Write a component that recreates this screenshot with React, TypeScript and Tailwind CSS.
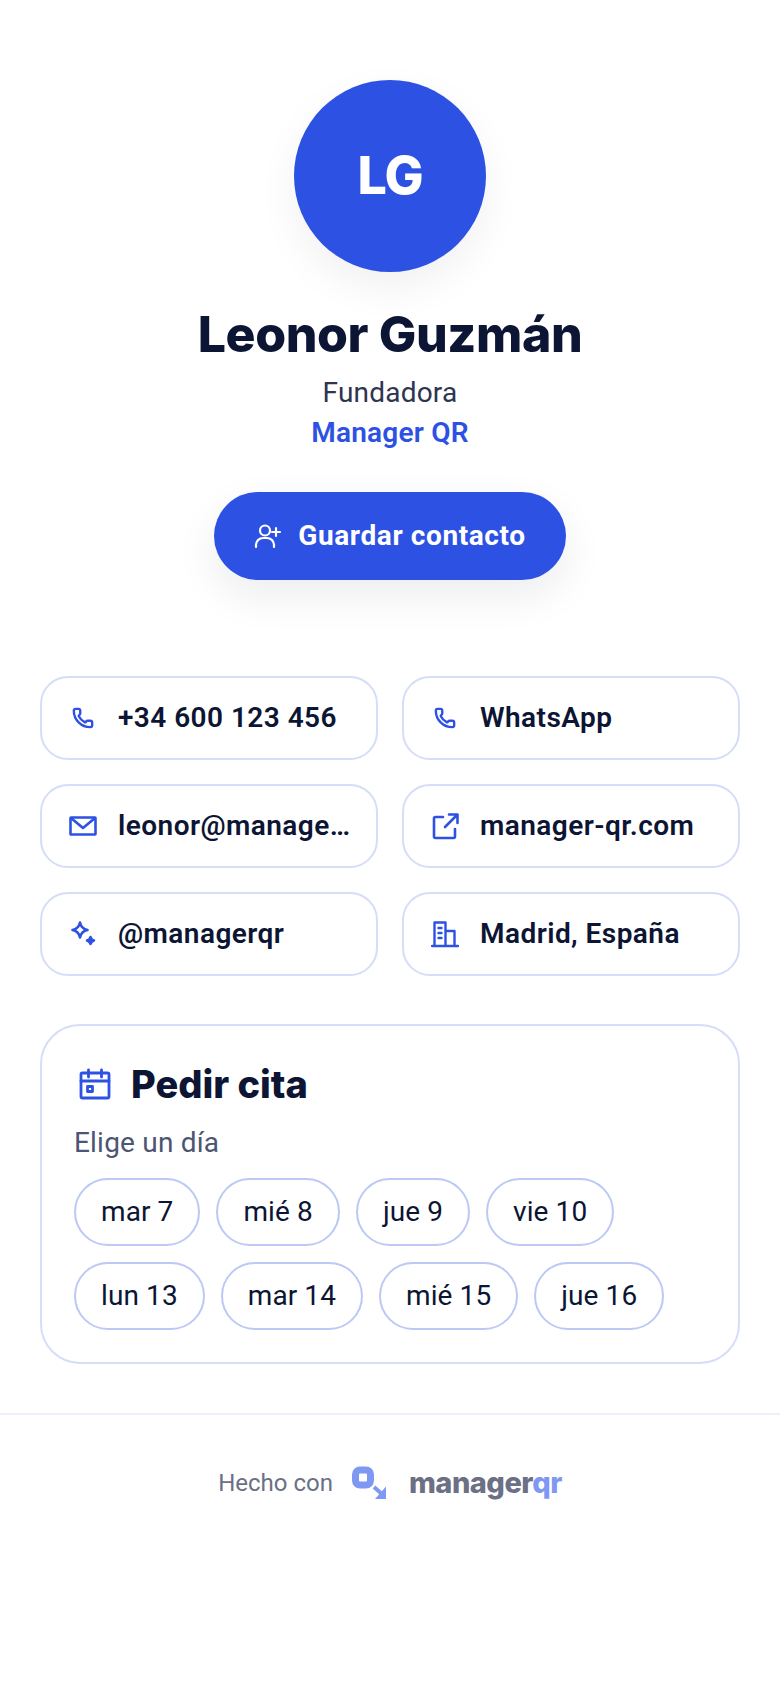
import { Phone } from 'lucide-react';
import type { ReactNode } from 'react';

const body = "font-['Roboto',sans-serif]";
const display = "font-['Inter',sans-serif]";

function UserPlusIcon() {
  return (
    <svg width="28" height="28" viewBox="0 0 28 28" fill="none" stroke="currentColor" strokeWidth="2.200" strokeLinecap="round" className="shrink-0">
      <circle cx="11" cy="8.500" r="5" />
      <path d="M2 25v-2.500a7 7 0 0 1 7-6.500h4a7 7 0 0 1 7 6.500V25" />
      <path d="M22 6v8M18 10h8" />
    </svg>
  );
}

function MailIcon() {
  return (
    <svg width="28" height="28" viewBox="0 0 28 28" fill="none" stroke="currentColor" strokeWidth="2.600" strokeLinejoin="round">
      <rect x="1.500" y="5.500" width="25" height="17" rx="0.500" />
      <path d="M2 6l12 10L26 6" />
    </svg>
  );
}

function SparkleIcon() {
  return (
    <svg width="28" height="28" viewBox="0 0 28 28" fill="none" stroke="currentColor" strokeWidth="2.600" strokeLinejoin="round">
      <path d="M11 2.500c.9 4.500 3 6.600 7.500 7.500-4.500.9-6.600 3-7.500 7.500-.9-4.500-3-6.600-7.500-7.500 4.500-.9 6.600-3 7.500-7.500z" />
      <path d="M21.500 17c.5 2 1.500 3 3.500 3.500-2 .5-3 1.500-3.500 3.500-.5-2-1.500-3-3.500-3.500 2-.5 3-1.500 3.500-3.500z" fill="currentColor" />
    </svg>
  );
}

function ExternalIcon() {
  return (
    <svg width="28" height="28" viewBox="0 0 28 28" fill="none" stroke="currentColor" strokeWidth="2.600" strokeLinecap="round" strokeLinejoin="round">
      <path d="M12 5H4.500A1.500 1.500 0 0 0 3 6.500v18A1.500 1.500 0 0 0 4.500 26h18a1.500 1.500 0 0 0 1.500-1.500V17" />
      <path d="M14 15L26 3M18 2.500h8.500V11" />
    </svg>
  );
}

function BuildingIcon() {
  return (
    <svg width="28" height="28" viewBox="0 0 28 28" fill="none" stroke="currentColor" strokeWidth="2.400" strokeLinecap="round" strokeLinejoin="round">
      <path d="M1 26h26M3.500 26V2.500h11V26M14.500 11h9V26" />
      <path d="M7.500 8h3M7.500 13h3M7.500 18h3" />
    </svg>
  );
}

function CalendarIcon() {
  return (
    <svg width="32" height="32" viewBox="0 0 32 32" fill="none" stroke="currentColor" strokeWidth="2.800" strokeLinecap="round" strokeLinejoin="round" className="shrink-0">
      <rect x="2" y="5" width="28" height="25" rx="1.500" />
      <path d="M2 13h28M9.500 2v7M22.500 2v7" />
      <rect x="8.500" y="18.500" width="5" height="5" />
    </svg>
  );
}

function LogoMark() {
  return (
    <svg width="36" height="34" viewBox="0 0 36 34" fill="none" className="shrink-0">
      <rect x="4.500" y="4" width="15" height="15" rx="4.500" stroke="#7f98f2" strokeWidth="7" />
      <path d="M23 21l9 8" stroke="#7f98f2" strokeWidth="4" />
      <path d="M35 20.500V33H24z" fill="#7f98f2" />
    </svg>
  );
}

function ContactItem({ icon, label }: { icon: ReactNode; label: string }) {
  return (
    <div className="flex h-[84px] min-w-0 items-center gap-[21px] rounded-[28px] border-2 border-[#d5ddf9] pl-[27px] pr-[24px]">
      <span className="flex w-[28px] shrink-0 items-center justify-center text-[#2d52e3]">{icon}</span>
      <span className="truncate text-[28px] font-semibold leading-[36px] tracking-[0.45px] text-[#0c1533]">{label}</span>
    </div>
  );
}

function DayChip({ label }: { label: string }) {
  return (
    <div className="flex h-[68px] items-center rounded-full border-2 border-[#bcc9f5] px-[25px] text-[28px] leading-[36px] tracking-[0.1px] text-[#0c1533]">
      {label}
    </div>
  );
}

const contacts = [
  { icon: <Phone size={22} strokeWidth={2.6} />, label: '+34 600 123 456' },
  { icon: <Phone size={22} strokeWidth={2.6} />, label: 'WhatsApp' },
  { icon: <MailIcon />, label: 'leonor@managerqr.com' },
  { icon: <ExternalIcon />, label: 'manager-qr.com' },
  { icon: <SparkleIcon />, label: '@managerqr' },
  { icon: <BuildingIcon />, label: 'Madrid, España' },
];

const days = ['mar 7', 'mié 8', 'jue 9', 'vie 10', 'lun 13', 'mar 14', 'mié 15', 'jue 16'];

export default function App() {
  return (
    <div className={`min-h-[1688px] bg-white pt-[80px] ${body}`}>
      <header className="flex flex-col items-center">
        <div className={`flex h-[192px] w-[192px] items-center justify-center rounded-full bg-[#2d52e3] text-[52px] font-extrabold tracking-[-1px] text-white shadow-[0_16px_40px_rgba(12,21,51,0.06)] ${display}`}>
          LG
        </div>
        <h1 className={`mt-[30px] text-[50px] font-extrabold leading-[64px] tracking-[-0.4px] text-[#0c1533] ${display}`}>
          Leonor Guzmán
        </h1>
        <p className="mt-[7px] text-[28px] leading-[40px] tracking-[0.2px] text-[#2d3550]">Fundadora</p>
        <p className="text-[28px] font-semibold leading-[40px] tracking-[0.2px] text-[#2d52e3]">Manager QR</p>
        <button className="mt-[39px] flex h-[88px] w-[352px] items-center justify-center gap-[16px] rounded-full bg-[#2d52e3] text-[28px] font-bold tracking-[0.6px] text-white shadow-[0_16px_40px_rgba(12,21,51,0.08)]">
          <UserPlusIcon />
          Guardar contacto
        </button>
      </header>

      <section className="mt-[96px] grid grid-cols-2 gap-x-[24px] gap-y-[24px] px-[40px]">
        {contacts.map((c) => (
          <ContactItem key={c.label} icon={c.icon} label={c.label} />
        ))}
      </section>

      <section className="mx-[40px] mt-[48px] rounded-[40px] border-2 border-[#d5ddf9] px-[32px] pb-[32px] pt-[36px]">
        <div className="flex items-center gap-[20px] pl-[5px] text-[#2d52e3]">
          <CalendarIcon />
          <h2 className={`text-[38px] font-extrabold leading-[44px] tracking-[0px] text-[#0c1533] ${display}`}>Pedir cita</h2>
        </div>
        <p className="mt-[17px] text-[28px] leading-[40px] tracking-[0.2px] text-[#4c5572]">Elige un día</p>
        <div className="mt-[15px] flex flex-wrap gap-x-[16px] gap-y-[16px]">
          {days.map((d) => (
            <DayChip key={d} label={d} />
          ))}
        </div>
      </section>

      <footer className="mt-[49px] flex items-center justify-center gap-[18px] border-t-2 border-[#eef0fb] pt-[50px]">
        <span className="text-[24px] leading-[32px] text-[#6b7085]">Hecho con</span>
        <LogoMark />
        <span className={`ml-[4px] text-[29px] font-extrabold leading-[36px] tracking-[-0.5px] text-[#6b7085] ${display}`}>
          manager<span className="text-[#7f98f2]">qr</span>
        </span>
      </footer>
    </div>
  );
}
